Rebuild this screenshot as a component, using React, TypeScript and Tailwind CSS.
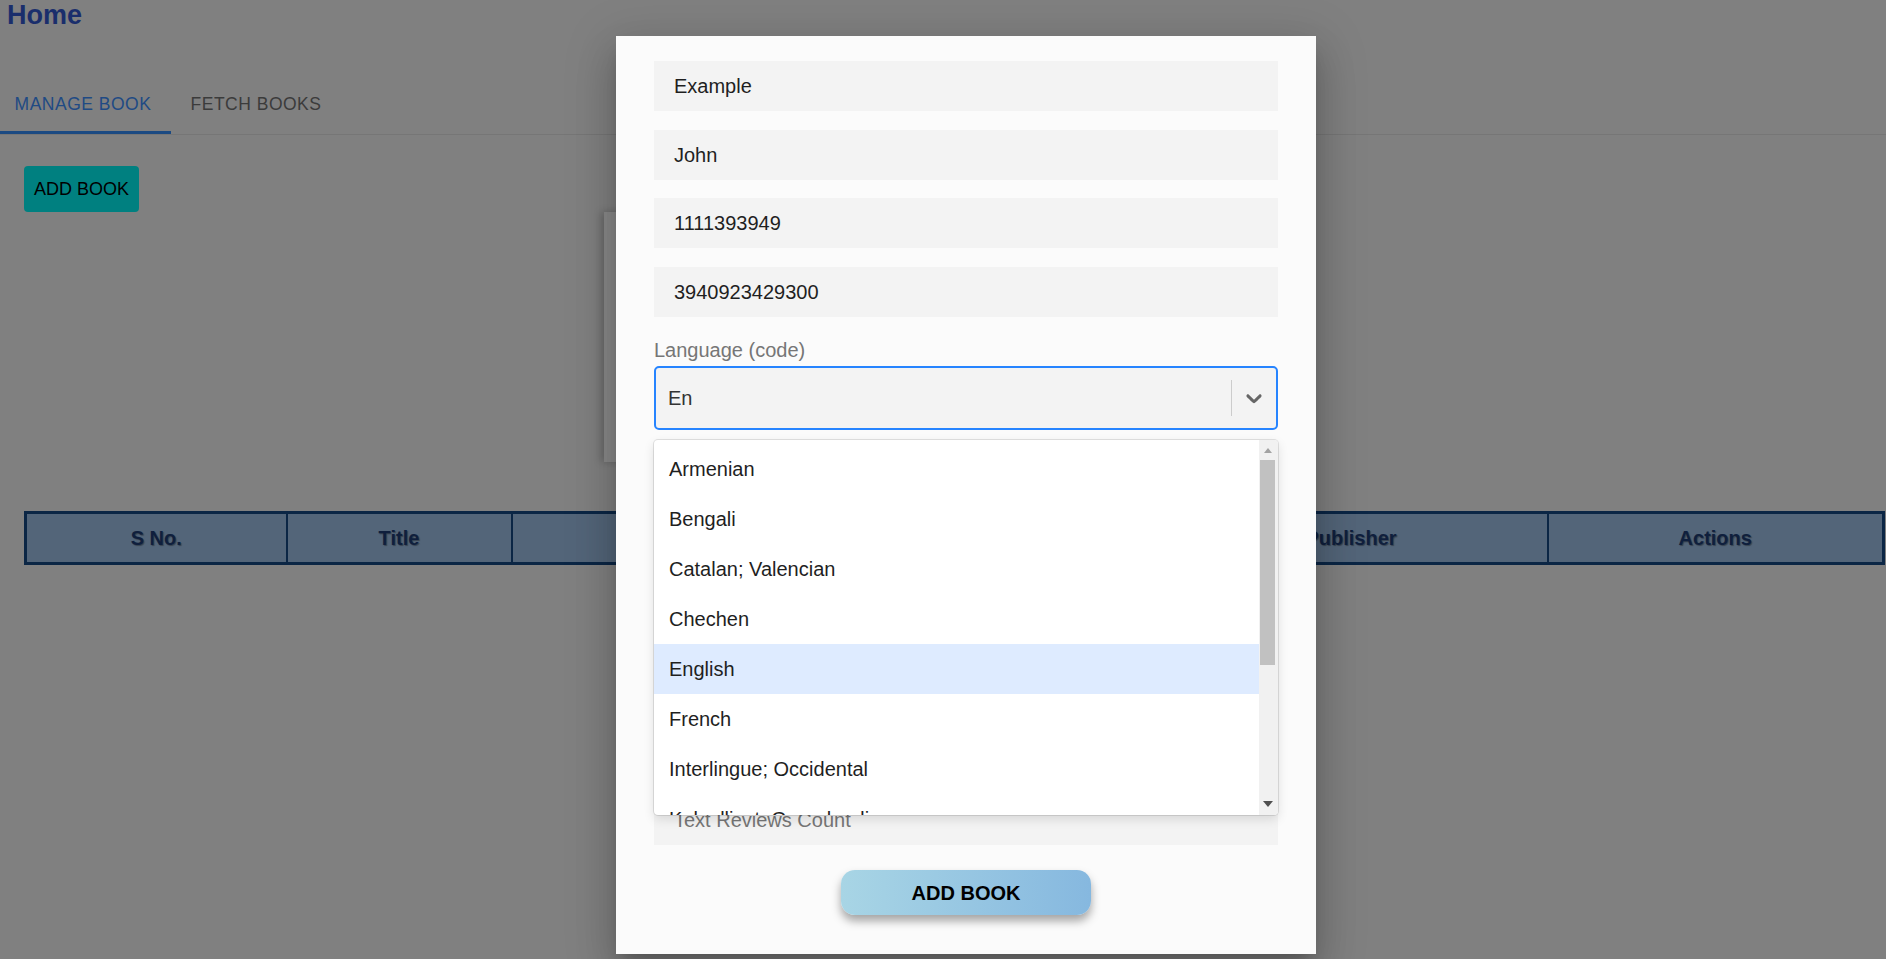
import React from "react";

const languages = [
  "Armenian",
  "Bengali",
  "Catalan; Valencian",
  "Chechen",
  "English",
  "French",
  "Interlingue; Occidental",
  "Kalaallisut; Greenlandic",
];

const columns = [
  { label: "S No.", width: "w-[261px]" },
  { label: "Title", width: "w-[225px]" },
  { label: "Authors", width: "w-[318px]" },
  { label: "ISBN", width: "w-[325px]" },
  { label: "Publisher", width: "w-[393px]" },
  { label: "Actions", width: "w-[336px]" },
];

function TextInput({ value, placeholder }: { value?: string; placeholder?: string }) {
  return (
    <div className="flex h-[50px] w-full items-center bg-[#f3f3f3] px-[20px] text-[20px]">
      {value ? (
        <span className="text-[#1f1f1f]">{value}</span>
      ) : (
        <span className="text-[#767676]">{placeholder}</span>
      )}
    </div>
  );
}

function ChevronDown() {
  return (
    <svg viewBox="0 0 20 20" className="h-[26px] w-[26px] fill-[#666]">
      <path d="M4.516 7.548c0.436-0.446 1.043-0.481 1.576 0l3.908 3.747 3.908-3.747c0.533-0.481 1.141-0.446 1.574 0 0.436 0.445 0.408 1.197 0 1.615-0.406 0.418-4.695 4.502-4.695 4.502-0.217 0.223-0.502 0.335-0.787 0.335s-0.57-0.112-0.789-0.335c0 0-4.287-4.084-4.695-4.502s-0.436-1.17 0-1.615z" />
    </svg>
  );
}

function LanguageSelect() {
  return (
    <div className="relative">
      <div className="flex h-[64px] items-center rounded-[5px] border-2 border-[#2684ff] bg-[#f3f3f3]">
        <div className="flex-1 pl-[12px] text-[20px] text-[#333]">En</div>
        <div className="my-[12px] w-px self-stretch bg-[#cccccc]" />
        <div className="px-[9px]">
          <ChevronDown />
        </div>
      </div>

      <div className="absolute left-0 right-0 top-[74px] z-10 flex h-[375px] overflow-hidden rounded-[4px] bg-white shadow-[0_0_0_1px_rgba(0,0,0,0.1),0_4px_11px_rgba(0,0,0,0.12)]">
        <div className="flex-1 overflow-hidden pt-[4px]">
          {languages.map((lang) => (
            <div
              key={lang}
              className={`flex h-[50px] items-center pl-[15px] text-[20px] text-[#1f1f1f] ${
                lang === "English" ? "bg-[#deebff]" : ""
              }`}
            >
              {lang}
            </div>
          ))}
        </div>
        <div className="flex w-[19px] flex-col items-center bg-[#f1f1f1] pr-[2px]">
          <div className="flex h-[20px] items-center justify-center">
            <div className="h-0 w-0 border-x-[4px] border-b-[5px] border-x-transparent border-b-[#a3a3a3]" />
          </div>
          <div className="h-[205px] w-[15px] bg-[#c1c1c1]" />
          <div className="flex-1" />
          <div className="flex h-[22px] items-center justify-center">
            <div className="h-0 w-0 border-x-[5px] border-t-[6px] border-x-transparent border-t-[#505050]" />
          </div>
        </div>
      </div>
    </div>
  );
}

export default function App() {
  return (
    <div className="relative h-[959px] w-[1886px] overflow-hidden bg-[#808080] font-['Liberation_Sans',Arial,sans-serif]">
      {/* page under the backdrop */}
      <div>
        <h1 className="pl-[7px] text-[27px] font-bold leading-[31px] text-[#1a2e6c]">Home</h1>

        <div className="mt-[41px] flex border-b border-[#767676]">
          <div className="flex h-[62px] w-[171px] items-center justify-center border-b-[3px] border-[#1b4a82] pr-[5px] pt-[5px] text-[17.5px] tracking-[0.5px] text-[#204a84]">
            MANAGE BOOK
          </div>
          <div className="flex h-[62px] w-[170px] items-center justify-center pt-[2px] text-[17.5px] tracking-[0.5px] text-[#3b3b3b]">
            FETCH BOOKS
          </div>
        </div>

        <div className="px-[24px] pt-[31px]">
          <button className="h-[46px] rounded-[4px] bg-[#008080] px-[10px] text-[18px] text-black">ADD BOOK</button>
        </div>

        <div className="mx-auto h-[250px] w-[678px] bg-[#8a8a8a] shadow-[-3px_0_8px_rgba(0,0,0,0.2)]" />

        <div className="pl-[24px] pt-[49px]">
          <table className="table-fixed border-collapse border-[3px] border-[#0b2645]">
            <thead>
              <tr>
                {columns.map((c) => (
                  <th
                    key={c.label}
                    className={`${c.width} h-[51px] border-2 border-[#0b2645] bg-[#536579] text-[20px] font-bold text-[#0f1f3d] [text-shadow:1px_1px_1px_rgba(0,0,0,0.35)]`}
                  >
                    {c.label}
                  </th>
                ))}
              </tr>
            </thead>
          </table>
        </div>
      </div>

      {/* dialog */}
      <div className="absolute left-[616px] top-[36px] flex h-[918px] w-[700px] flex-col bg-[#fbfbfb] px-[38px] pt-[25px] shadow-[0_11px_15px_-7px_rgba(0,0,0,0.2),0_24px_38px_3px_rgba(0,0,0,0.14),0_9px_46px_8px_rgba(0,0,0,0.12)]">
        <div className="flex flex-col gap-[18.7px]">
          <TextInput value="Example" />
          <TextInput value="John" />
          <TextInput value="1111393949" />
          <TextInput value="3940923429300" />
        </div>

        <label className="mt-[22px] block h-[23px] text-[20px] leading-[23px] text-[#767676]">Language (code)</label>
        <div className="mt-[4px]">
          <LanguageSelect />
        </div>

        <div className="mt-[20px] flex flex-col gap-[19px]">
          <TextInput placeholder="" />
          <TextInput placeholder="" />
          <TextInput placeholder="" />
          <TextInput placeholder="" />
          <TextInput placeholder="" />
          <TextInput placeholder="Text Reviews Count" />
        </div>

        <div className="mt-[25px] flex justify-center">
          <button className="h-[45px] w-[250px] rounded-[14px] bg-gradient-to-r from-[#a8d5e5] to-[#86b8df] text-[20px] font-bold text-black shadow-[0_6px_10px_rgba(0,0,0,0.35)]">
            ADD BOOK
          </button>
        </div>
      </div>
    </div>
  );
}
